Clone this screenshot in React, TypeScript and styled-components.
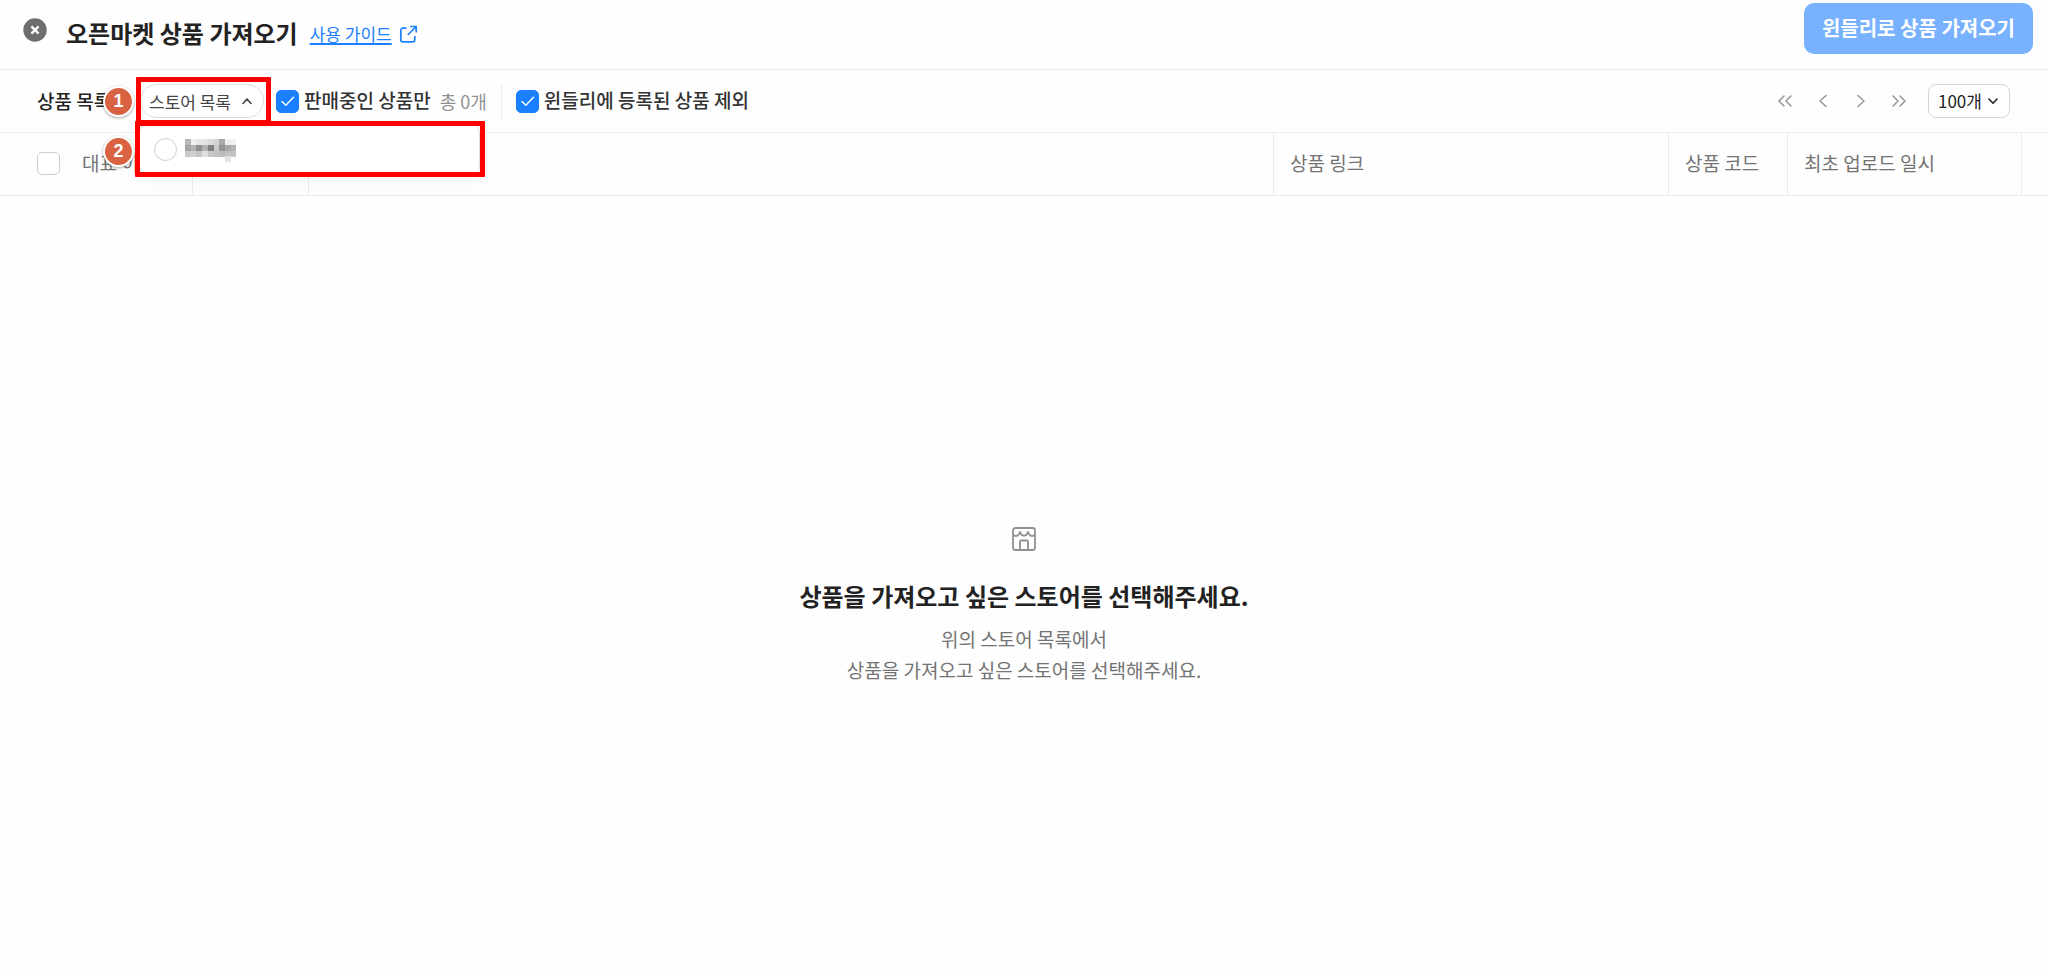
import React, { useState } from "react";
import styled, { createGlobalStyle } from "styled-components";

const GlobalStyle = createGlobalStyle`
  *, *::before, *::after { box-sizing: border-box; }
  body {
    margin: 0;
    background: #fefefe;
    color: #222;
    font-family: "Noto Sans CJK KR", "Noto Sans", sans-serif;
  }
  button, input, select { font-family: inherit; margin: 0; }
`;

const Page = styled.div`
  min-height: 100vh;
  display: flex;
  flex-direction: column;
`;

const Header = styled.header`
  display: flex;
  align-items: flex-start;
  height: 70px;
  padding: 3px 15px 0 23px;
  border-bottom: 1px solid #ebebeb;
`;

const CloseButton = styled.button`
  display: flex;
  margin-top: 15px;
  padding: 0;
  border: 0;
  background: none;
`;

const Heading = styled.div`
  flex: 1;
  display: flex;
  align-items: center;
  height: 60px;
  margin-left: 19px;
`;

const Title = styled.h1`
  margin: 0;
  font-size: 24px;
  line-height: 36px;
  font-weight: 700;
`;

const GuideLink = styled.a`
  display: flex;
  align-items: center;
  gap: 7px;
  margin-left: 12px;
  padding-top: 2px;
  color: #1a80ff;
  font-size: 17px;
  line-height: 24px;
  text-decoration: none;
  span {
    text-decoration: underline;
    text-decoration-thickness: 2px;
    text-underline-offset: 2px;
    text-decoration-skip-ink: none;
  }
`;

const ImportButton = styled.button`
  height: 51px;
  padding: 0 18px 2px;
  border: 0;
  border-radius: 10px;
  background: #78b2ff;
  color: #fff;
  font-size: 20px;
  font-weight: 700;
  white-space: nowrap;
`;

const Toolbar = styled.div`
  display: flex;
  align-items: center;
  height: 63px;
  padding: 0 38px 0 37px;
  border-bottom: 1px solid #f0f0f0;
`;

const ToolbarTitle = styled.h2`
  margin: 0;
  width: 103px;
  padding-bottom: 2px;
  font-size: 19px;
  font-weight: 500;
`;

const StorePicker = styled.div`
  position: relative;
  margin-right: 12px;
`;

const StoreButton = styled.button`
  display: flex;
  align-items: center;
  justify-content: space-between;
  width: 124px;
  height: 34px;
  padding: 0 10px 0 8px;
  border: 1px solid #dcdcdc;
  border-radius: 17px;
  background: #fff;
  color: #444;
  font-size: 17px;
  white-space: nowrap;
`;

const StoreMenu = styled.div`
  position: absolute;
  z-index: 1;
  top: 39px;
  left: -1px;
  display: flex;
  align-items: center;
  width: 341px;
  height: 53px;
  padding: 0 14px;
  border: 1px solid #e0e0e0;
  border-radius: 10px;
  background: #fff;
  box-shadow: 0 6px 16px rgba(0, 0, 0, 0.04);
`;

const StoreOption = styled.label`
  display: flex;
  align-items: center;
  gap: 8px;
`;

const Radio = styled.input`
  appearance: none;
  width: 23px;
  height: 23px;
  border: 1px solid #ccc;
  border-radius: 50%;
  background: #fff;
`;

const Outline = styled.div<{ $top: number; $left: number; $width: number; $height: number }>`
  position: absolute;
  z-index: 2;
  top: ${(p) => p.$top}px;
  left: ${(p) => p.$left}px;
  width: ${(p) => p.$width}px;
  height: ${(p) => p.$height}px;
  border: 5px solid #fe0000;
  border-radius: 1px;
  pointer-events: none;
`;

const StepBadge = styled.span<{ $top: number }>`
  position: absolute;
  z-index: 3;
  top: ${(p) => p.$top}px;
  left: -37px;
  width: 31px;
  height: 31px;
  border: 2px solid #fff;
  border-radius: 50%;
  background: #d96242;
  box-shadow: 0 1px 3px rgba(0, 0, 0, 0.35);
  color: #fff;
  font: bold 18px/27px "Liberation Sans", sans-serif;
  text-align: center;
`;

const Check = styled.label`
  display: flex;
  align-items: center;
  gap: 5px;
  color: #333;
  font-size: 19px;
  line-height: 26px;
  font-weight: 500;
  white-space: nowrap;
`;

const CheckText = styled.span`
  padding-bottom: 2px;
`;

const CheckMark = styled.span`
  position: relative;
  display: flex;
  svg { position: absolute; inset: 0; pointer-events: none; }
`;

const Checkbox = styled.input`
  appearance: none;
  width: 23px;
  height: 23px;
  border: 1px solid #ccc;
  border-radius: 5px;
  background: #fff;
  &:checked { border-color: #1a80ff; background: #1a80ff; }
`;

const Total = styled.span`
  margin-left: 9px;
  color: #919191;
  font-size: 18px;
`;

const Divider = styled.span`
  width: 1px;
  height: 34px;
  margin: 0 14px 0 14px;
  background: #ebebeb;
`;

const Pager = styled.nav`
  display: flex;
  margin-left: auto;
  margin-right: 10px;
`;

const PagerButton = styled.button`
  display: flex;
  align-items: center;
  justify-content: center;
  width: 38px;
  height: 34px;
  padding: 0;
  border: 0;
  background: none;
  color: #999;
`;

const SizePicker = styled.div`
  position: relative;
  svg { position: absolute; top: 13px; right: 11px; pointer-events: none; }
`;

const SizeSelect = styled.select`
  appearance: none;
  display: block;
  width: 82px;
  height: 34px;
  padding: 0 0 1px 9px;
  border: 1px solid #d5d5d5;
  border-radius: 8px;
  background: #fff;
  color: #222;
  font-size: 17px;
`;

const Table = styled.table`
  width: 100%;
  table-layout: fixed;
  border-collapse: separate;
  border-spacing: 0;
`;

const HeadCell = styled.th<{ $width?: number; $last?: boolean }>`
  width: ${(p) => (p.$width ? `${p.$width}px` : "auto")};
  height: 63px;
  padding: ${(p) => (p.$last ? "0" : "0 16px 2px")};
  border-bottom: 1px solid #ebebeb;
  border-right: ${(p) => (p.$last ? "0" : "1px solid #ebebeb")};
  color: #737373;
  font-size: 19px;
  line-height: 28px;
  font-weight: 400;
  text-align: left;
  white-space: nowrap;
`;

const PickCell = styled(HeadCell)`
  padding: 0 0 2px 37px;
`;

const PickAll = styled.label`
  display: flex;
  align-items: center;
  gap: 22px;
`;

const Empty = styled.main`
  flex: 1;
  display: flex;
  flex-direction: column;
  align-items: center;
  justify-content: center;
  padding-top: 38px;
`;

const EmptyTitle = styled.h2`
  margin: 27px 0 9px;
  font-size: 24px;
  line-height: 36px;
  font-weight: 700;
`;

const EmptyText = styled.p`
  margin: 0;
  color: #737373;
  font-size: 19px;
  line-height: 31px;
  text-align: center;
`;

const Tick = () => (
  <svg width="23" height="23" viewBox="0 0 23 23" fill="none" stroke="#fff" strokeWidth="1.4" strokeLinecap="round" strokeLinejoin="round">
    <path d="M6 11.5 9.8 15.3 17.5 7.3" />
  </svg>
);

const Chevron = ({ d, w, h }: { d: string; w: number; h: number }) => (
  <svg width={w} height={h} viewBox={`0 0 ${w} ${h}`} fill="none" stroke="currentColor" strokeWidth="1.6" strokeLinecap="round" strokeLinejoin="round">
    <path d={d} />
  </svg>
);

const mosaic = [
  ["#b8b8b8", "#f0f0f0", "#e6e6e6", "#e2e2e2", "#dadada", "#d2d2d2", "#a8a8a8", "#eeeeee", "#f2f2f2"],
  ["#a6a6a6", "#b4b4b4", "#8f8f8f", "#b0b0b0", "#808080", "#c8c8c8", "#949494", "#a8a8a8", "#b3b3b3"],
  ["#c9c9c9", "#d0d0d0", "#c4c4c4", "#dedede", "#c7c7c7", "#c2c2c2", "#bdbdbd", "#c2c2c2", "#c4c4c4"],
];

const MaskedName = () => (
  <svg width="52" height="24" viewBox="0 0 52 24" role="img" aria-label="스토어" shapeRendering="crispEdges">
    {mosaic.map((row, y) =>
      row.map((fill, x) => <rect key={`${x}-${y}`} x={x * 5.7} y={1 + y * 5.8} width="5.8" height="5.9" fill={fill} />)
    )}
    <rect x="39.9" y="18.4" width="5.8" height="5.6" fill="#e3e3e3" />
  </svg>
);

export default function App() {
  const [onSale, setOnSale] = useState(true);
  const [exclude, setExclude] = useState(true);
  return (
    <Page>
      <GlobalStyle />
      <Header>
        <CloseButton type="button" aria-label="닫기">
          <svg width="24" height="24" viewBox="0 0 24 24">
            <circle cx="12" cy="12" r="11.7" fill="#6e6e6e" />
            <path d="M8.4 8.4l7.2 7.2M15.6 8.4l-7.2 7.2" stroke="#fff" strokeWidth="2.4" />
          </svg>
        </CloseButton>
        <Heading>
          <Title>오픈마켓 상품 가져오기</Title>
          <GuideLink href="#guide">
            <span>사용 가이드</span>
            <svg width="19" height="19" viewBox="0 0 19 19" fill="none" stroke="currentColor" strokeWidth="1.7" strokeLinejoin="round">
              <path d="M7.500 3.200H4a2.200 2.200 0 0 0-2.200 2.200v9.300A2.200 2.200 0 0 0 4 16.900h9.600a2.200 2.200 0 0 0 2.200-2.200V11M11.200 1.500H17.200v6M17.200 1.500 8.800 10" />
            </svg>
          </GuideLink>
        </Heading>
        <ImportButton type="button">윈들리로 상품 가져오기</ImportButton>
      </Header>

      <Toolbar>
        <ToolbarTitle>상품 목록</ToolbarTitle>
        <StorePicker>
          <StoreButton type="button" aria-expanded="true">
            스토어 목록
            <Chevron w={12} h={8} d="M2 6.500 6 2l4 4.500" />
          </StoreButton>
          <StoreMenu>
            <StoreOption>
              <Radio type="radio" name="store" />
              <MaskedName />
            </StoreOption>
          </StoreMenu>
          <Outline $top={-7} $left={-4} $width={135} $height={48} />
          <Outline $top={37} $left={-5} $width={350} $height={56} />
          <StepBadge $top={2}>1</StepBadge>
          <StepBadge $top={52}>2</StepBadge>
        </StorePicker>
        <Check>
          <CheckMark>
            <Checkbox type="checkbox" checked={onSale} onChange={(e) => setOnSale(e.target.checked)} />
            {onSale && <Tick />}
          </CheckMark>
          <CheckText>판매중인 상품만</CheckText>
        </Check>
        <Total>총 0개</Total>
        <Divider />
        <Check>
          <CheckMark>
            <Checkbox type="checkbox" checked={exclude} onChange={(e) => setExclude(e.target.checked)} />
            {exclude && <Tick />}
          </CheckMark>
          <CheckText>윈들리에 등록된 상품 제외</CheckText>
        </Check>
        <Pager aria-label="페이지 이동">
          <PagerButton type="button" aria-label="처음">
            <Chevron w={16} h={14} d="M7 2 2 7l5 5M14 2 9 7l5 5" />
          </PagerButton>
          <PagerButton type="button" aria-label="이전">
            <Chevron w={10} h={14} d="M8 1.500 2 7l6 5.500" />
          </PagerButton>
          <PagerButton type="button" aria-label="다음">
            <Chevron w={10} h={14} d="M2 1.500 8 7l-6 5.500" />
          </PagerButton>
          <PagerButton type="button" aria-label="마지막">
            <Chevron w={16} h={14} d="M2 2l5 5-5 5M9 2l5 5-5 5" />
          </PagerButton>
        </Pager>
        <SizePicker>
          <SizeSelect aria-label="페이지당 개수" defaultValue="100">
            <option value="100">100개</option>
          </SizeSelect>
          <Chevron w={12} h={8} d="M2 2l4 4.200L10 2" />
        </SizePicker>
      </Toolbar>

      <Table>
        <thead>
          <tr>
            <PickCell $width={193}>
              <PickAll>
                <Checkbox type="checkbox" />
                대표 이미지
              </PickAll>
            </PickCell>
            <HeadCell $width={116} />
            <HeadCell />
            <HeadCell $width={395}>상품 링크</HeadCell>
            <HeadCell $width={119}>상품 코드</HeadCell>
            <HeadCell $width={234}>최초 업로드 일시</HeadCell>
            <HeadCell $width={26} $last />
          </tr>
        </thead>
      </Table>

      <Empty>
        <svg width="24" height="24" viewBox="0 0 24 24" fill="none" stroke="#919191" strokeWidth="1.8" strokeLinejoin="round">
          <rect x="1" y="1" width="22" height="22" rx="2.5" />
          <path d="M1.500 7.500C2.500 9.800 6.700 9.800 8 5C9.400 9.800 14.600 9.800 16 5C17.300 9.800 21.500 9.800 22.500 7.500M8 23v-8.500a1 1 0 0 1 1-1h6a1 1 0 0 1 1 1V23" />
        </svg>
        <EmptyTitle>상품을 가져오고 싶은 스토어를 선택해주세요.</EmptyTitle>
        <EmptyText>
          위의 스토어 목록에서
          <br />
          상품을 가져오고 싶은 스토어를 선택해주세요.
        </EmptyText>
      </Empty>
    </Page>
  );
}
